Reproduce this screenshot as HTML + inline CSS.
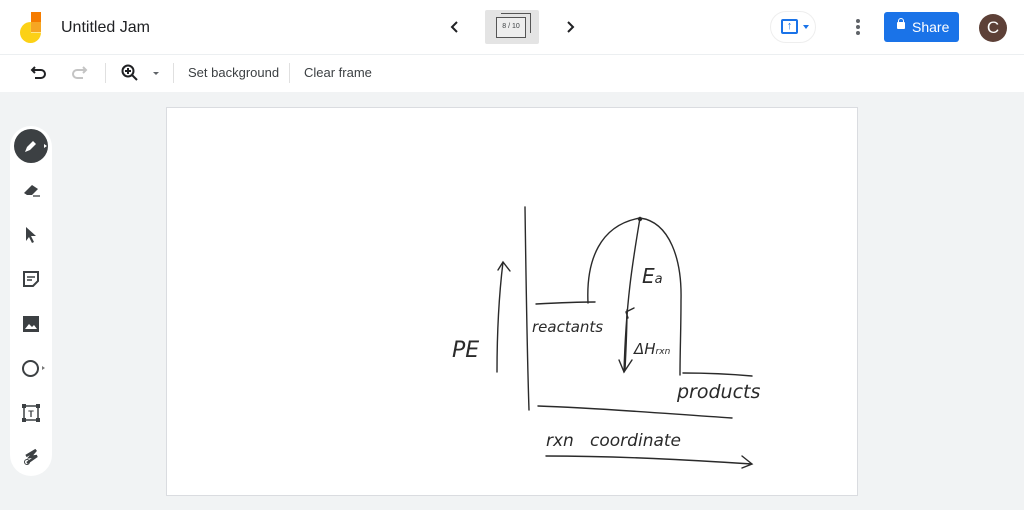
<!DOCTYPE html>
<html><head><style>
*{margin:0;padding:0;box-sizing:border-box}
body{width:1024px;height:510px;background:#f1f3f4;font-family:"Liberation Sans",sans-serif;position:relative;overflow:hidden;color:#3c4043}
.hdr{position:absolute;left:0;top:0;width:1024px;height:55px;background:#fff;border-bottom:1px solid #eceff1}
.tb{position:absolute;left:0;top:55px;width:1024px;height:37px;background:#fff}
.abs{position:absolute}
.sep{position:absolute;top:63px;width:1px;height:20px;background:#e0e0e0}
.canvas{position:absolute;left:166px;top:107px;width:692px;height:389px;background:#fff;border:1px solid #dadce0}
.side{position:absolute;left:10px;top:126px;width:42px;height:350px;background:#fff;border-radius:21px}
</style></head><body>
<div class="hdr">
 <div class="abs" style="left:31px;top:12px;width:10px;height:10px;background:#f57c00"></div>
 <div class="abs" style="left:31px;top:22px;width:10px;height:10px;background:#f6a623"></div>
 <div class="abs" style="left:20px;top:22px;width:21px;height:21px;border-radius:50%;background:#fcd116;clip-path:polygon(0 0,52% 0,52% 50%,100% 50%,100% 100%,0 100%)"></div>
 <div class="abs" style="left:61px;top:19px;font-size:16px;color:#202124">Untitled Jam</div>
 <svg class="abs" style="left:449px;top:20px" width="12" height="14"><path d="M8 2 L3 7 L8 12" stroke="#202124" stroke-width="2" fill="none"/></svg>
 <div class="abs" style="left:485px;top:10px;width:54px;height:34px;background:#e4e4e4;border-radius:2px"></div>
 <div class="abs" style="left:496px;top:17px;width:30px;height:21px;border:1.5px solid #555;background:#eee;font-size:7px;text-align:center;line-height:18px">8 / 10</div>
 <div class="abs" style="left:501px;top:13px;width:30px;height:20px;border-top:1.5px solid #555;border-right:1.5px solid #555"></div>
 <svg class="abs" style="left:564px;top:20px" width="12" height="14"><path d="M4 2 L9 7 L4 12" stroke="#202124" stroke-width="2" fill="none"/></svg>
 <div class="abs" style="left:770px;top:11px;width:46px;height:32px;border-radius:16px;border:1px solid #eee"></div>
 <div class="abs" style="left:781px;top:19px;width:17px;height:15px;border:2px solid #1a73e8;border-radius:2px;color:#1a73e8;font-size:11px;line-height:10px;text-align:center;font-weight:bold">↑</div>
 <div class="abs" style="left:803px;top:25px;border:3.5px solid transparent;border-top:4px solid #1a73e8"></div>
 <div class="abs" style="left:856px;top:19px;width:4px;height:4px;border-radius:2px;background:#5f6368;box-shadow:0 6px 0 #5f6368,0 12px 0 #5f6368"></div>
 <div class="abs" style="left:884px;top:12px;width:75px;height:30px;background:#1a73e8;border-radius:3px;color:#fff;font-size:14px;line-height:30px;padding-left:28px">Share</div>
 <div class="abs" style="left:897px;top:22px;width:8px;height:7px;background:#fff;border-radius:1px"></div>
 <div class="abs" style="left:898px;top:18px;width:6px;height:6px;border:1.5px solid #fff;border-radius:3px 3px 0 0"></div>
 <div class="abs" style="left:979px;top:14px;width:28px;height:28px;border-radius:50%;background:#5d4037;color:#fff;font-size:17px;text-align:center;line-height:28px">C</div>
</div>
<div class="tb"></div>
<svg class="abs" style="left:30px;top:64px" width="18" height="16"><path d="M5 3 L2 6 L5 9 M2 6 H11 a4 4 0 0 1 0 8 H5" stroke="#202124" stroke-width="2" fill="none"/></svg>
<svg class="abs" style="left:70px;top:64px" width="18" height="16"><path d="M13 3 L16 6 L13 9 M16 6 H7 a4 4 0 0 0 0 8 H13" stroke="#c4c4c4" stroke-width="2" fill="none"/></svg>
<div class="sep" style="left:105px"></div>
<svg class="abs" style="left:120px;top:63px" width="20" height="20"><circle cx="8" cy="8" r="5.5" stroke="#202124" stroke-width="2" fill="none"/><path d="M12 12 L17 17 M8 5 V11 M5 8 H11" stroke="#202124" stroke-width="2"/></svg>
<div class="abs" style="left:153px;top:72px;border:3px solid transparent;border-top:3px solid #5f6368"></div>
<div class="sep" style="left:173px"></div>
<div class="abs" style="left:188px;top:65px;font-size:13px">Set background</div>
<div class="sep" style="left:289px"></div>
<div class="abs" style="left:304px;top:65px;font-size:13px">Clear frame</div>
<div class="side">
 <div class="abs" style="left:4px;top:3px;width:34px;height:34px;border-radius:50%;background:#3c4043"></div>
 <svg class="abs" style="left:13px;top:12px" width="16" height="16"><path d="M2 14 L4 9 L10 3 L13 6 L7 12 Z" fill="#fff"/></svg>
 <div class="abs" style="left:34px;top:18px;border:2.5px solid transparent;border-left:3px solid #fff"></div>
 <svg class="abs" style="left:12px;top:56px" width="20" height="16"><path d="M2 11 L10 3 L16 7 L10 13 H5 Z" fill="#3c4043"/><path d="M11 14 H18" stroke="#3c4043" stroke-width="1.3"/></svg>
 <svg class="abs" style="left:14px;top:100px" width="14" height="18"><path d="M2 1 L2 15 L5 11 L8 17 L10 16 L7 10 L12 10 Z" fill="#3c4043"/></svg>
 <svg class="abs" style="left:12px;top:144px" width="18" height="18"><path d="M2 2 H16 V11 L11 16 H2 Z" fill="none" stroke="#3c4043" stroke-width="2"/><path d="M5 7 H13 M5 10 H10" stroke="#3c4043" stroke-width="1.5"/></svg>
 <svg class="abs" style="left:12px;top:189px" width="18" height="18"><rect x="1" y="1" width="16" height="16" fill="#3c4043"/><path d="M3 14 L7 9 L10 12 L12 10 L15 14 Z" fill="#fff"/></svg>
 <div class="abs" style="left:12px;top:234px;width:17px;height:17px;border:2px solid #3c4043;border-radius:50%"></div>
 <div class="abs" style="left:32px;top:240px;border:2px solid transparent;border-left:3px solid #777"></div>
 <svg class="abs" style="left:11px;top:277px" width="20" height="20"><rect x="3" y="3" width="14" height="14" fill="none" stroke="#3c4043" stroke-width="1.5"/><rect x="1" y="1" width="4" height="4" fill="#3c4043"/><rect x="15" y="1" width="4" height="4" fill="#3c4043"/><rect x="1" y="15" width="4" height="4" fill="#3c4043"/><rect x="15" y="15" width="4" height="4" fill="#3c4043"/><text x="10" y="14" font-size="9" font-weight="bold" text-anchor="middle" fill="#3c4043" font-family="Liberation Sans">T</text></svg>
 <svg class="abs" style="left:12px;top:322px" width="18" height="18"><path d="M4 8 L14 2 L8 9 L15 8 L5 15" fill="none" stroke="#3c4043" stroke-width="2.5"/><circle cx="5" cy="14" r="2.5" fill="none" stroke="#3c4043"/></svg>
</div>
<div class="canvas"></div>
<svg class="abs" style="left:0;top:0" width="1024" height="510" fill="none" stroke="#2a2a2a" stroke-width="1.4" stroke-linecap="round">
 <path d="M525 207 C526 280 527 350 529 410"/>
 <path d="M538 406 C600 408 670 414 732 418"/>
 <path d="M497 372 C497 330 499 295 503 262 M498 270 L503 262 L510 271"/>
 <path d="M546 456 C620 456 690 460 752 464 M742 456 L752 464 L742 468"/>
 <path d="M536 304 C555 303 575 302 595 302"/>
 <path d="M588 303 C586 260 600 225 640 218 C670 222 682 260 681 300 C681 330 680 350 680 375"/>
 <path d="M640 218 C633 260 626 300 624 372"/>
 <path d="M619 360 L624 372 L632 360"/>
 <path d="M628 318 L626 312 L634 308 M627 310 C627 330 626 350 625 370"/>
 <path d="M683 373 C700 373 730 374 752 376"/>
 <circle cx="640" cy="219" r="1.5" fill="#222"/>
 <g fill="#2a2a2a" stroke="none" font-family="DejaVu Sans" font-style="italic">
  <text x="452" y="357" font-size="22" font-weight="200">PE</text>
  <text x="532" y="332" font-size="15" font-weight="200">reactants</text>
  <text x="642" y="283" font-size="20" font-weight="200">E<tspan font-size="13">a</tspan></text>
  <text x="634" y="354" font-size="15" font-weight="200">ΔH<tspan font-size="9">rxn</tspan></text>
  <text x="677" y="398" font-size="19" font-weight="200">products</text>
  <text x="546" y="446" font-size="17" font-weight="200">rxn&#160;&#160; coordinate</text>
 </g>
</svg>
</body></html>
